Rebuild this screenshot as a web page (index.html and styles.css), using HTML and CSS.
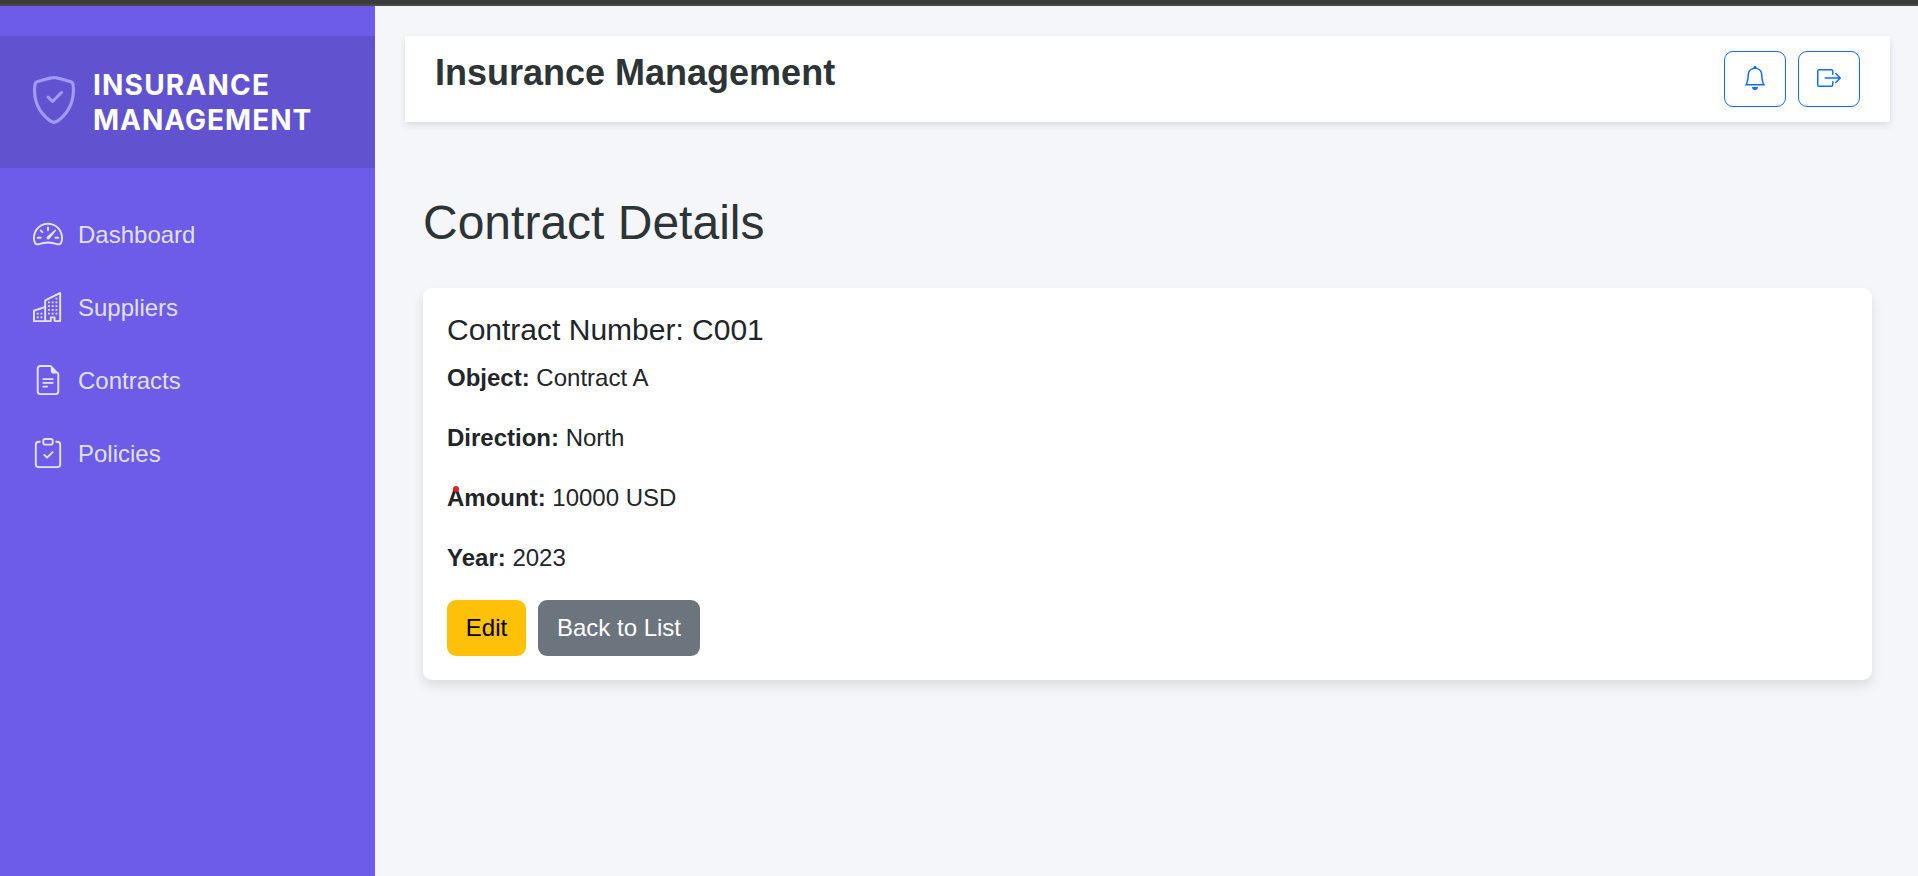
FILE: index.html
```html
<!DOCTYPE html>
<html lang="en">
<head>
<meta charset="utf-8">
<title>Contract Details</title>
<link rel="stylesheet" href="styles.css">
</head>
<body>
<div class="topline"></div>
<div class="app">
  <aside class="sidebar">
    <div class="brand">
      <svg class="brand-icon" viewBox="0 0 16 16" fill="currentColor"><path d="M5.338 1.59a61.44 61.44 0 0 0-2.837.856.481.481 0 0 0-.328.39c-.554 4.157.726 7.19 2.253 9.188a10.725 10.725 0 0 0 2.287 2.233c.346.244.652.42.893.533.12.057.218.095.293.118a.55.55 0 0 0 .101.025.615.615 0 0 0 .1-.025c.076-.023.174-.061.294-.118.24-.113.547-.29.893-.533a10.726 10.726 0 0 0 2.287-2.233c1.527-1.997 2.807-5.031 2.253-9.188a.48.48 0 0 0-.328-.39c-.651-.213-1.75-.56-2.837-.855C9.552 1.29 8.531 1.067 8 1.067c-.53 0-1.552.223-2.662.524zM5.072.56C6.157.265 7.31 0 8 0s1.843.265 2.928.56c1.11.3 2.229.655 2.887.87a1.54 1.54 0 0 1 1.044 1.262c.596 4.477-.787 7.795-2.465 9.99a11.775 11.775 0 0 1-2.517 2.453 7.159 7.159 0 0 1-1.048.625c-.28.132-.581.24-.829.24s-.548-.108-.829-.24a7.158 7.158 0 0 1-1.048-.625 11.777 11.777 0 0 1-2.517-2.453C1.928 10.487.545 7.169 1.141 2.692A1.54 1.54 0 0 1 2.185 1.43 62.456 62.456 0 0 1 5.072.56z"/><path d="M10.854 5.146a.5.5 0 0 1 0 .708l-3 3a.5.5 0 0 1-.708 0l-1.5-1.5a.5.5 0 1 1 .708-.708L7.5 7.793l2.646-2.647a.5.5 0 0 1 .708 0z"/></svg>
      <div class="brand-name"><span class="brand-first">INSURANCE</span><span class="brand-second">MANAGEMENT</span></div>
    </div>
    <nav class="nav">
      <a class="nav-link"><svg class="nav-icon" viewBox="0 0 16 16" fill="currentColor"><path d="M8 4a.5.5 0 0 1 .5.5V6a.5.5 0 0 1-1 0V4.5A.5.5 0 0 1 8 4zM3.732 5.732a.5.5 0 0 1 .707 0l.915.914a.5.5 0 1 1-.708.708l-.914-.915a.5.5 0 0 1 0-.707zM2 10a.5.5 0 0 1 .5-.5h1.586a.5.5 0 0 1 0 1H2.5A.5.5 0 0 1 2 10zm9.5 0a.5.5 0 0 1 .5-.5h1.5a.5.5 0 0 1 0 1H12a.5.5 0 0 1-.5-.5zm.754-4.246a.389.389 0 0 0-.527-.02L7.547 9.31a.91.91 0 1 0 1.302 1.258l3.434-4.297a.389.389 0 0 0-.029-.518z"/><path fill-rule="evenodd" d="M0 10a8 8 0 1 1 15.547 2.661c-.442 1.253-1.845 1.602-2.932 1.25C11.309 13.488 9.475 13 8 13c-1.474 0-3.31.488-4.615.911-1.087.352-2.49.003-2.932-1.25A7.988 7.988 0 0 1 0 10zm8-7a7 7 0 0 0-6.603 9.329c.203.575.923.876 1.68.63C4.397 12.533 6.358 12 8 12s3.604.532 4.923.96c.757.245 1.477-.056 1.68-.631A7 7 0 0 0 8 3z"/></svg><span>Dashboard</span></a>
      <a class="nav-link"><svg class="nav-icon" viewBox="0 0 16 16" fill="currentColor"><path fill-rule="evenodd" d="M14.763.075A.5.5 0 0 1 15 .5v15a.5.5 0 0 1-.5.5h-3a.5.5 0 0 1-.5-.5V14h-1v1.5a.5.5 0 0 1-.5.5h-9a.5.5 0 0 1-.5-.5V10a.5.5 0 0 1 .342-.474L6 7.64V4.5a.5.5 0 0 1 .276-.447l8-4a.5.5 0 0 1 .487.022zM6 8.694 1 10.36V15h5V8.694zM7 15h2v-1.500a.5.5 0 0 1 .5-.5h2a.5.5 0 0 1 .5.5V15h2V1.309l-7 3.500V15z"/><path d="M2 11h1v1H2v-1zm2 0h1v1H4v-1zm-2 2h1v1H2v-1zm2 0h1v1H4v-1zm4-4h1v1H8V9zm2 0h1v1h-1V9zm-2 2h1v1H8v-1zm2 0h1v1h-1v-1zm2-2h1v1h-1V9zm0 2h1v1h-1v-1zM8 7h1v1H8V7zm2 0h1v1h-1V7zm2 0h1v1h-1V7zM8 5h1v1H8V5zm2 0h1v1h-1V5zm2 0h1v1h-1V5zm0-2h1v1h-1V3z"/></svg><span>Suppliers</span></a>
      <a class="nav-link"><svg class="nav-icon" viewBox="0 0 16 16" fill="currentColor"><path d="M5.5 7a.5.5 0 0 0 0 1h5a.5.5 0 0 0 0-1h-5zM5 9.500a.5.5 0 0 1 .5-.5h5a.5.5 0 0 1 0 1h-5a.5.5 0 0 1-.5-.5zm0 2a.5.5 0 0 1 .5-.5h2a.5.5 0 0 1 0 1h-2a.5.5 0 0 1-.5-.5z"/><path d="M9.500 0H4a2 2 0 0 0-2 2v12a2 2 0 0 0 2 2h8a2 2 0 0 0 2-2V4.500L9.500 0zm0 1v2A1.500 1.500 0 0 0 11 4.500h2V14a1 1 0 0 1-1 1H4a1 1 0 0 1-1-1V2a1 1 0 0 1 1-1h5.500z"/></svg><span>Contracts</span></a>
      <a class="nav-link"><svg class="nav-icon" viewBox="0 0 16 16" fill="currentColor"><path fill-rule="evenodd" d="M10.854 7.146a.5.5 0 0 1 0 .708l-3 3a.5.5 0 0 1-.708 0l-1.500-1.500a.5.5 0 1 1 .708-.708L7.500 9.793l2.646-2.647a.5.5 0 0 1 .708 0z"/><path d="M4 1.500H3a2 2 0 0 0-2 2V14a2 2 0 0 0 2 2h10a2 2 0 0 0 2-2V3.500a2 2 0 0 0-2-2h-1v1h1a1 1 0 0 1 1 1V14a1 1 0 0 1-1 1H3a1 1 0 0 1-1-1V3.500a1 1 0 0 1 1-1h1v-1z"/><path d="M9.500 1a.5.5 0 0 1 .5.5v1a.5.5 0 0 1-.5.5h-3a.5.5 0 0 1-.5-.5v-1a.5.5 0 0 1 .5-.5h3zm-3-1A1.500 1.500 0 0 0 5 1.500v1A1.500 1.500 0 0 0 6.500 4h3A1.500 1.500 0 0 0 11 2.500v-1A1.500 1.500 0 0 0 9.500 0h-3z"/></svg><span>Policies</span></a>
    </nav>
  </aside>
  <main class="main">
    <header class="header">
      <h1 class="header-title">Insurance Management</h1>
      <div class="header-actions">
        <button class="icon-btn" aria-label="Notifications"><svg class="action-icon" viewBox="0 0 16 16" fill="currentColor"><path d="M8 16a2 2 0 0 0 2-2H6a2 2 0 0 0 2 2zM8 1.918l-.797.161A4.002 4.002 0 0 0 4 6c0 .628-.134 2.197-.459 3.742-.16.767-.376 1.566-.663 2.258h10.244c-.287-.692-.502-1.490-.663-2.258C12.134 8.197 12 6.628 12 6a4.002 4.002 0 0 0-3.203-3.920L8 1.917zM14.220 12c.223.447.481.801.78 1H1c.299-.199.557-.553.78-1C2.680 10.200 3 6.880 3 6c0-2.420 1.720-4.440 4.005-4.901a1 1 0 1 1 1.990 0A5.002 5.002 0 0 1 13 6c0 .880.320 4.200 1.220 6z"/></svg></button>
        <button class="icon-btn" aria-label="Log out"><svg class="action-icon" viewBox="0 0 16 16" fill="currentColor"><path fill-rule="evenodd" d="M10 12.500a.5.5 0 0 1-.5.5h-8a.5.5 0 0 1-.5-.5v-9a.5.5 0 0 1 .5-.5h8a.5.5 0 0 1 .5.5v2a.5.5 0 0 0 1 0v-2A1.500 1.500 0 0 0 9.500 2h-8A1.500 1.500 0 0 0 0 3.500v9A1.500 1.500 0 0 0 1.500 14h8a1.500 1.500 0 0 0 1.500-1.500v-2a.5.5 0 0 0-1 0v2z"/><path fill-rule="evenodd" d="M15.854 8.354a.5.5 0 0 0 0-.708l-3-3a.5.5 0 0 0-.708.708L14.293 7.500H5.500a.5.5 0 0 0 0 1h8.793l-2.147 2.146a.5.5 0 0 0 .708.708l3-3z"/></svg></button>
      </div>
    </header>
    <section class="content">
      <h2 class="page-title">Contract Details</h2>
      <div class="card">
        <h5 class="card-title">Contract Number: C001</h5>
        <p class="field"><strong>Object:</strong> Contract A</p>
        <p class="field"><strong>Direction:</strong> North</p>
        <p class="field marked"><strong>Amount:</strong> 10000 USD</p>
        <p class="field"><strong>Year:</strong> 2023</p>
        <div class="actions">
          <a class="btn btn-edit">Edit</a>
          <a class="btn btn-back">Back to List</a>
        </div>
      </div>
    </section>
  </main>
</div>
</body>
</html>
```
FILE: styles.css
```css
* { box-sizing: border-box; }
body {
  margin: 0;
  height: 876px;
  overflow: hidden;
  display: flex;
  flex-direction: column;
  background: #f4f6fa;
  color: #212529;
  font: 24px/36px "Liberation Sans", Arial, sans-serif;
}
.topline { height: 6px; flex: none; background: #3b3b3b; border-bottom: 2px solid #484848; }
.app { flex: 1; display: flex; }
.sidebar { width: 375px; flex: none; padding-top: 30px; background: #6c5ce7; }
.brand {
  height: 132px;
  padding-left: 30px;
  display: flex;
  align-items: center;
  background: #6152d0;
}
.brand-icon { width: 48px; height: 48px; color: #a29bfe; margin-top: -4px; }
.brand-name {
  display: flex;
  flex-direction: column;
  margin-left: 15px;
  padding-top: 1px;
  color: #fff;
  font: 700 28px/35px Inter, sans-serif;
}
.brand-first { letter-spacing: 1.2px; }
.brand-second { letter-spacing: 1px; }
.nav { padding: 30px 0 0 33px; display: flex; flex-direction: column; }
.nav-link { height: 73px; display: flex; align-items: center; color: rgba(255, 255, 255, .83); }
.nav-icon { width: 30px; height: 30px; margin: -2px 15px 0 0; }
.main { flex: 1; padding: 30px 28px 0 30px; }
.header {
  height: 86px;
  padding: 15px 30px;
  display: flex;
  justify-content: space-between;
  align-items: flex-start;
  background: #fff;
  box-shadow: 0 3px 7px rgba(0, 0, 0, .11);
}
.header-title { margin: 0; font-size: 36px; line-height: 43px; font-weight: 700; color: #2d3436; }
.header-actions { display: flex; gap: 12px; }
.icon-btn {
  width: 62px;
  height: 56px;
  padding: 0 0 2px;
  display: flex;
  align-items: center;
  justify-content: center;
  border: 1px solid #0d6efd;
  border-radius: 9px;
  background: transparent;
  color: #0d6efd;
}
.action-icon { width: 24px; height: 24px; }
.content { padding: 72px 18px 0; }
.page-title { margin: 0 0 36px; font-size: 48px; line-height: 58px; font-weight: 400; color: #2d3436; }
.card {
  height: 392px;
  padding: 24px;
  border-radius: 9px;
  background: #fff;
  box-shadow: 0 6px 12px rgba(0, 0, 0, .1);
}
.card-title { margin: 0 0 12px; font-size: 30px; line-height: 36px; font-weight: 400; }
.field { margin: 0 0 24px; }
.marked { position: relative; }
.marked::before {
  content: "";
  position: absolute;
  left: 6px;
  top: 6px;
  width: 6px;
  height: 6px;
  border-radius: 50%;
  background: #ed1c24;
}
.actions { display: flex; gap: 12px; }
.btn { height: 56px; padding: 10px 0; border-radius: 9px; text-align: center; }
.btn-edit { width: 79px; background: #ffc107; color: #000; }
.btn-back { width: 162px; background: #6c757d; color: #fff; }
```
